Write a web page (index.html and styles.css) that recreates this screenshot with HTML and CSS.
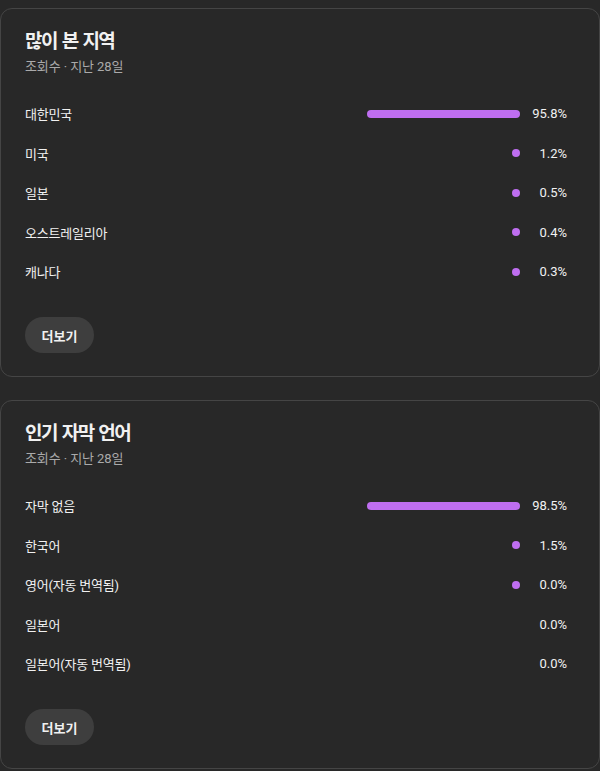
FILE: index.html
```html
<!DOCTYPE html>
<html lang="ko">
<head>
<meta charset="utf-8">
<link rel="stylesheet" href="styles.css">
</head>
<body>
<section class="card">
  <h2 class="title">많이 본 지역</h2>
  <div class="subtitle">조회수 · 지난 28일</div>
  <ul class="rows">
    <li class="row"><span class="label">대한민국</span><span class="track"><span class="fill" style="width:153px"></span></span><span class="pct">95.8%</span></li>
    <li class="row"><span class="label">미국</span><span class="track"><span class="fill"></span></span><span class="pct">1.2%</span></li>
    <li class="row"><span class="label">일본</span><span class="track"><span class="fill"></span></span><span class="pct">0.5%</span></li>
    <li class="row"><span class="label">오스트레일리아</span><span class="track"><span class="fill"></span></span><span class="pct">0.4%</span></li>
    <li class="row"><span class="label">캐나다</span><span class="track"><span class="fill"></span></span><span class="pct">0.3%</span></li>
  </ul>
  <button class="more">더보기</button>
</section>
<section class="card">
  <h2 class="title">인기 자막 언어</h2>
  <div class="subtitle">조회수 · 지난 28일</div>
  <ul class="rows">
    <li class="row"><span class="label">자막 없음</span><span class="track"><span class="fill" style="width:153px"></span></span><span class="pct">98.5%</span></li>
    <li class="row"><span class="label">한국어</span><span class="track"><span class="fill"></span></span><span class="pct">1.5%</span></li>
    <li class="row"><span class="label">영어(자동 번역됨)</span><span class="track"><span class="fill"></span></span><span class="pct">0.0%</span></li>
    <li class="row"><span class="label">일본어</span><span class="track"></span><span class="pct">0.0%</span></li>
    <li class="row"><span class="label">일본어(자동 번역됨)</span><span class="track"></span><span class="pct">0.0%</span></li>
  </ul>
  <button class="more">더보기</button>
</section>
</body>
</html>
```
FILE: styles.css
```css
html, body {
  background: #282828;
}
body {
  margin: 8px 0;
  font-family: Roboto, "Noto Sans CJK KR", sans-serif;
  color: #f1f1f1;
}
.card {
  box-sizing: border-box;
  width: 600px;
  height: 369px;
  border: 1px solid #454545;
  border-radius: 12px;
  padding: 19px 32px 23px 24px;
  margin-bottom: 23px;
  display: flex;
  flex-direction: column;
  align-items: flex-start;
}
.title {
  margin: 0;
  font-size: 19px;
  line-height: 28px;
  font-weight: 700;
  letter-spacing: -1.5px;
  word-spacing: 1.5px;
  color: #f1f1f1;
}
.subtitle {
  margin-top: 1px;
  font-size: 13px;
  line-height: 20px;
  letter-spacing: -0.1px;
  color: #aaaaaa;
}
.rows {
  list-style: none;
  margin: 17px 0 0;
  padding: 0;
  align-self: stretch;
}
.row {
  height: 39.5px;
  display: flex;
  align-items: center;
}
.label {
  flex: 1;
  font-size: 13px;
  letter-spacing: -0.2px;
  color: #f1f1f1;
}
.track {
  width: 153px;
  display: flex;
  justify-content: flex-end;
}
.fill {
  width: 8px;
  height: 8px;
  border-radius: 4px;
  background: #bf6ef0;
}
.pct {
  width: 47px;
  text-align: right;
  font-size: 13px;
  color: #f1f1f1;
}
.more {
  margin-top: 25.5px;
  height: 36px;
  padding: 0 16.5px;
  border: none;
  border-radius: 18px;
  background: #3e3e3e;
  color: #f1f1f1;
  font-family: Roboto, "Noto Sans CJK KR", sans-serif;
  font-size: 13px;
  font-weight: 700;
}
```
